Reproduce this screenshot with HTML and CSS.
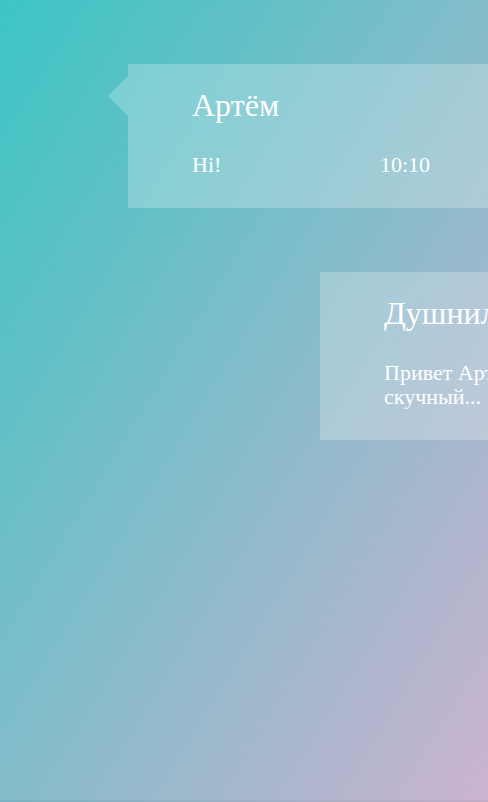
FILE: index.html
```html
<!DOCTYPE html>
<html lang="ru">
<head>
<meta charset="utf-8">
<title>Чат</title>
<link rel="stylesheet" href="styles.css">
</head>
<body>
<main class="chat">
  <section class="card card-first">
    <h2 class="name">Артём</h2>
    <div class="row">
      <p class="text">Hi!</p>
      <span class="time">10:10</span>
    </div>
  </section>
  <section class="card card-second">
    <h2 class="name">Душнила</h2>
    <div class="row">
      <p class="text">Привет Артём, ты такой<br>скучный...</p>
    </div>
  </section>
</main>
</body>
</html>
```
FILE: styles.css
```css
html {
  margin: 0;
  height: 802px;
  background: linear-gradient(to right, #79b4c2, #c3adc8);
}
body {
  margin: 0;
  height: 800px;
  overflow: hidden;
  background: linear-gradient(to bottom right, #3cc5c4 0%, #cbb3d0 100%);
  font-family: "Liberation Serif", "Times New Roman", serif;
  color: #fff;
}
.chat {
  display: flex;
  flex-direction: column;
  gap: 64px;
  padding-top: 64px;
}
.card {
  position: relative;
  width: 420px;
  box-sizing: border-box;
  padding: 23px 0 31px 64px;
  background: rgba(255, 255, 255, 0.24);
  flex-shrink: 0;
}
.card-first {
  margin-left: 128px;
}
.card-first::before {
  content: "";
  position: absolute;
  left: -20px;
  top: 12px;
  border-right: 20px solid rgba(255, 255, 255, 0.24);
  border-top: 20px solid transparent;
  border-bottom: 20px solid transparent;
}
.card-second {
  margin-left: 320px;
}
.name {
  margin: 0 0 29px;
  font-size: 32px;
  line-height: 37px;
  font-weight: normal;
  white-space: nowrap;
}
.row {
  display: flex;
  align-items: baseline;
}
.text {
  margin: 0;
  font-size: 22px;
  line-height: 24px;
  white-space: nowrap;
  width: 188px;
}
.time {
  font-size: 22px;
  line-height: 24px;
}
```
